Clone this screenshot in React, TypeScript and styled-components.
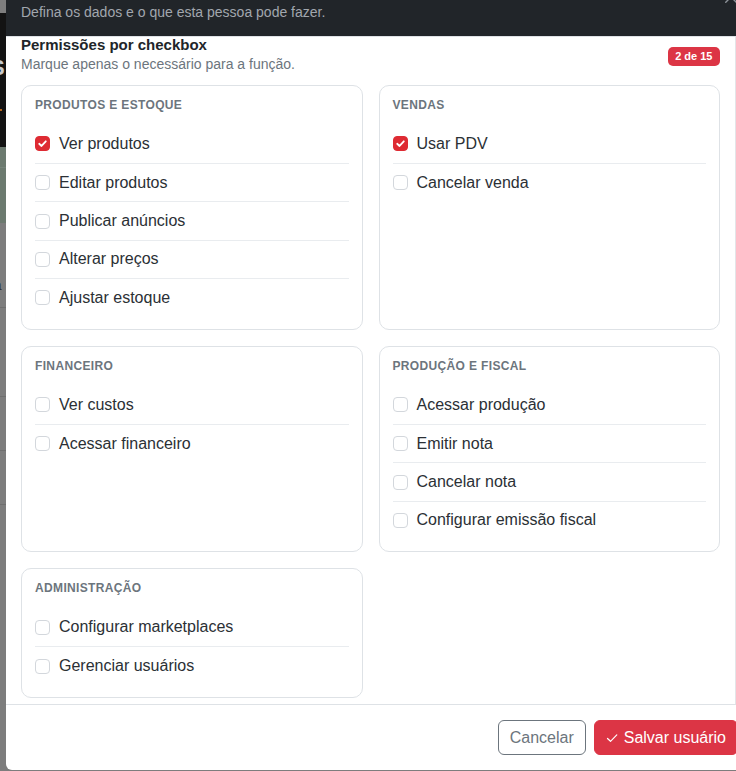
import React from "react";
import styled, { createGlobalStyle } from "styled-components";

const GlobalStyle = createGlobalStyle`
  html, body {
    margin: 0;
    padding: 0;
    background: #7d7d7d;
    overflow: hidden;
  }
  body {
    font-family: "Liberation Sans", Arial, sans-serif;
    -webkit-font-smoothing: antialiased;
  }
  * { box-sizing: border-box; }
`;

const Screen = styled.div`
  display: flex;
  width: 736px;
  height: 771px;
  overflow: hidden;
  background: #7d7d7d;
`;

/* Dimmed page visible behind the dialog */
const PageEdge = styled.div`
  flex: 0 0 6px;
  display: flex;
  flex-direction: column;
  overflow: hidden;
`;

const EdgeBand = styled.div<{ $h?: number; $bg: string; $line?: string }>`
  flex: ${(p) => (p.$h ? `0 0 ${p.$h}px` : "1 1 auto")};
  background: ${(p) => p.$bg};
  border-bottom: ${(p) => (p.$line ? `1px solid ${p.$line}` : "none")};
  display: flex;
  flex-direction: column;
  overflow: hidden;
`;

const EdgeGlyph = styled.span<{ $top: number; $size: number; $color: string; $bold?: boolean }>`
  display: block;
  margin: ${(p) => p.$top}px 0 0 ${(p) => -p.$size * 0.45}px;
  font-size: ${(p) => p.$size}px;
  line-height: 1;
  font-weight: ${(p) => (p.$bold ? 700 : 400)};
  color: ${(p) => p.$color};
  white-space: nowrap;
`;

const EdgeDot = styled.span`
  display: block;
  width: 2px;
  height: 2px;
  margin-top: 30px;
  background: #b5651d;
`;

/* Dialog */
const Dialog = styled.section`
  flex: 0 0 744px;
  height: 770px;
  background: #fff;
  border-bottom-left-radius: 6px;
  display: flex;
  flex-direction: column;
  overflow: hidden;
`;

const Header = styled.header`
  position: relative;
  flex: 0 0 37px;
  background: #212529;
  border-bottom: 1px solid #dee2e6;
  padding: 2px 15px 0;
`;

const HeaderHint = styled.p`
  margin: 0;
  font-size: 14px;
  line-height: 20px;
  color: #a1a7ae;
`;

const CloseButton = styled.button`
  position: absolute;
  top: -11px;
  right: 11px;
  width: 16px;
  height: 16px;
  padding: 0;
  border: 0;
  background: transparent;
  color: #8d9399;
  display: flex;
  align-items: center;
  justify-content: center;
`;

const Body = styled.div`
  flex: 1 1 auto;
  min-height: 0;
  width: 730px;
  border-right: 1px solid #e3e5e8;
  padding: 0 15px;
  display: flex;
  flex-direction: column;
`;

const SectionHead = styled.div`
  display: flex;
  align-items: center;
  justify-content: space-between;
  margin-bottom: 11px;
`;

const Title = styled.h3`
  margin: 0;
  font-size: 15px;
  line-height: 16px;
  font-weight: 700;
  color: #212529;
`;

const Subtitle = styled.p`
  margin: 1px 0 0;
  font-size: 14px;
  line-height: 20px;
  color: #6c757d;
`;

const Badge = styled.span`
  height: 19px;
  padding: 0 7.5px;
  border-radius: 5px;
  background: #dc3545;
  color: #fff;
  font-size: 11px;
  font-weight: 700;
  line-height: 19px;
  margin-top: 1px;
`;

const Grid = styled.div`
  display: grid;
  grid-template-columns: 1fr 1fr;
  gap: 16px;
`;

const Card = styled.div`
  border: 1px solid #dee2e6;
  border-radius: 10px;
  padding: 11px 13px 12.4px;
  background: #fff;
`;

const CardLabel = styled.h4`
  margin: 0 0 11.6px;
  font-size: 12px;
  line-height: 16px;
  font-weight: 700;
  letter-spacing: 0.35px;
  text-transform: uppercase;
  color: #6c757d;
`;

const CheckRow = styled.label`
  display: flex;
  align-items: center;
  gap: 9px;
  height: 38.4px;
  font-size: 16px;
  line-height: 24px;
  color: #2b3035;

  & + & {
    border-top: 1px solid #e9ecef;
  }
`;

const Box = styled.span<{ $on: boolean }>`
  flex: 0 0 15px;
  width: 15px;
  height: 15px;
  border-radius: 4px;
  border: 1px solid ${(p) => (p.$on ? "#de2b33" : "#d3d7dc")};
  background: ${(p) => (p.$on ? "#de2b33" : "#fff")};
  display: flex;
  align-items: center;
  justify-content: center;
`;

const Footer = styled.footer`
  flex: 0 0 66px;
  border-top: 1px solid #dee2e6;
  padding: 15px 12px;
  display: flex;
  justify-content: flex-end;
  gap: 8px;
`;

const Button = styled.button<{ $primary?: boolean }>`
  height: 35px;
  padding: 0 11px;
  border-radius: 6px;
  border: 1px solid ${(p) => (p.$primary ? "#dc3545" : "#6c757d")};
  background: ${(p) => (p.$primary ? "#dc3545" : "#fff")};
  color: ${(p) => (p.$primary ? "#fff" : "#6c757d")};
  font-family: inherit;
  font-size: 16px;
  line-height: 24px;
  display: inline-flex;
  align-items: center;
  gap: 6px;
  white-space: nowrap;
`;

type Group = { title: string; items: { label: string; on?: boolean }[] };

const groups: Group[] = [
  {
    title: "Produtos e estoque",
    items: [
      { label: "Ver produtos", on: true },
      { label: "Editar produtos" },
      { label: "Publicar anúncios" },
      { label: "Alterar preços" },
      { label: "Ajustar estoque" },
    ],
  },
  {
    title: "Vendas",
    items: [{ label: "Usar PDV", on: true }, { label: "Cancelar venda" }],
  },
  {
    title: "Financeiro",
    items: [{ label: "Ver custos" }, { label: "Acessar financeiro" }],
  },
  {
    title: "Produção e fiscal",
    items: [
      { label: "Acessar produção" },
      { label: "Emitir nota" },
      { label: "Cancelar nota" },
      { label: "Configurar emissão fiscal" },
    ],
  },
  {
    title: "Administração",
    items: [{ label: "Configurar marketplaces" }, { label: "Gerenciar usuários" }],
  },
];

const Tick = () => (
  <svg width="11" height="11" viewBox="0 0 16 16" fill="none">
    <polyline points="3.2,8.4 6.6,11.6 12.8,4.8" stroke="#fff" strokeWidth="2.6" strokeLinecap="round" strokeLinejoin="round" />
  </svg>
);

const SaveCheck = () => (
  <svg width="12" height="12" viewBox="0 0 16 16" fill="none">
    <polyline points="2,8.6 6,12.4 14.4,3.8" stroke="#fff" strokeWidth="1.6" strokeLinecap="round" strokeLinejoin="round" />
  </svg>
);

const CloseIcon = () => (
  <svg width="14" height="14" viewBox="0 0 16 16" fill="none">
    <path d="M2 2L14 14M14 2L2 14" stroke="currentColor" strokeWidth="1.6" strokeLinecap="round" />
  </svg>
);

export default function App() {
  return (
    <>
      <GlobalStyle />
      <Screen>
        <PageEdge>
          <EdgeBand $h={13} $bg="#7e7e7e" />
          <EdgeBand $h={134} $bg="#131313">
            <EdgeGlyph $top={44} $size={22} $color="#c6c9cc" $bold>
              S
            </EdgeGlyph>
            <EdgeDot />
          </EdgeBand>
          <EdgeBand $h={21} $bg="#6c7a6f" $line="#76847a" />
          <EdgeBand $h={55} $bg="#6c7a6f" />
          <EdgeBand $h={85} $bg="#7d7d7d" $line="#6f6f6f">
            <EdgeGlyph $top={55} $size={14} $color="#2e2e2e">
              a
            </EdgeGlyph>
          </EdgeBand>
          <EdgeBand $h={89} $bg="#7d7d7d" $line="#6f6f6f" />
          <EdgeBand $h={54} $bg="#7d7d7d" $line="#6f6f6f" />
          <EdgeBand $h={54} $bg="#7d7d7d" $line="#6f6f6f" />
          <EdgeBand $bg="#7d7d7d" />
        </PageEdge>

        <Dialog>
          <Header>
            <HeaderHint>Defina os dados e o que esta pessoa pode fazer.</HeaderHint>
            <CloseButton aria-label="Fechar">
              <CloseIcon />
            </CloseButton>
          </Header>

          <Body>
            <SectionHead>
              <div>
                <Title>Permissões por checkbox</Title>
                <Subtitle>Marque apenas o necessário para a função.</Subtitle>
              </div>
              <Badge>2 de 15</Badge>
            </SectionHead>

            <Grid>
              {groups.map((g) => (
                <Card key={g.title}>
                  <CardLabel>{g.title}</CardLabel>
                  {g.items.map((it) => (
                    <CheckRow key={it.label}>
                      <Box $on={!!it.on}>{it.on && <Tick />}</Box>
                      {it.label}
                    </CheckRow>
                  ))}
                </Card>
              ))}
            </Grid>
          </Body>

          <Footer>
            <Button>Cancelar</Button>
            <Button $primary>
              <SaveCheck />
              Salvar usuário
            </Button>
          </Footer>
        </Dialog>
      </Screen>
    </>
  );
}
